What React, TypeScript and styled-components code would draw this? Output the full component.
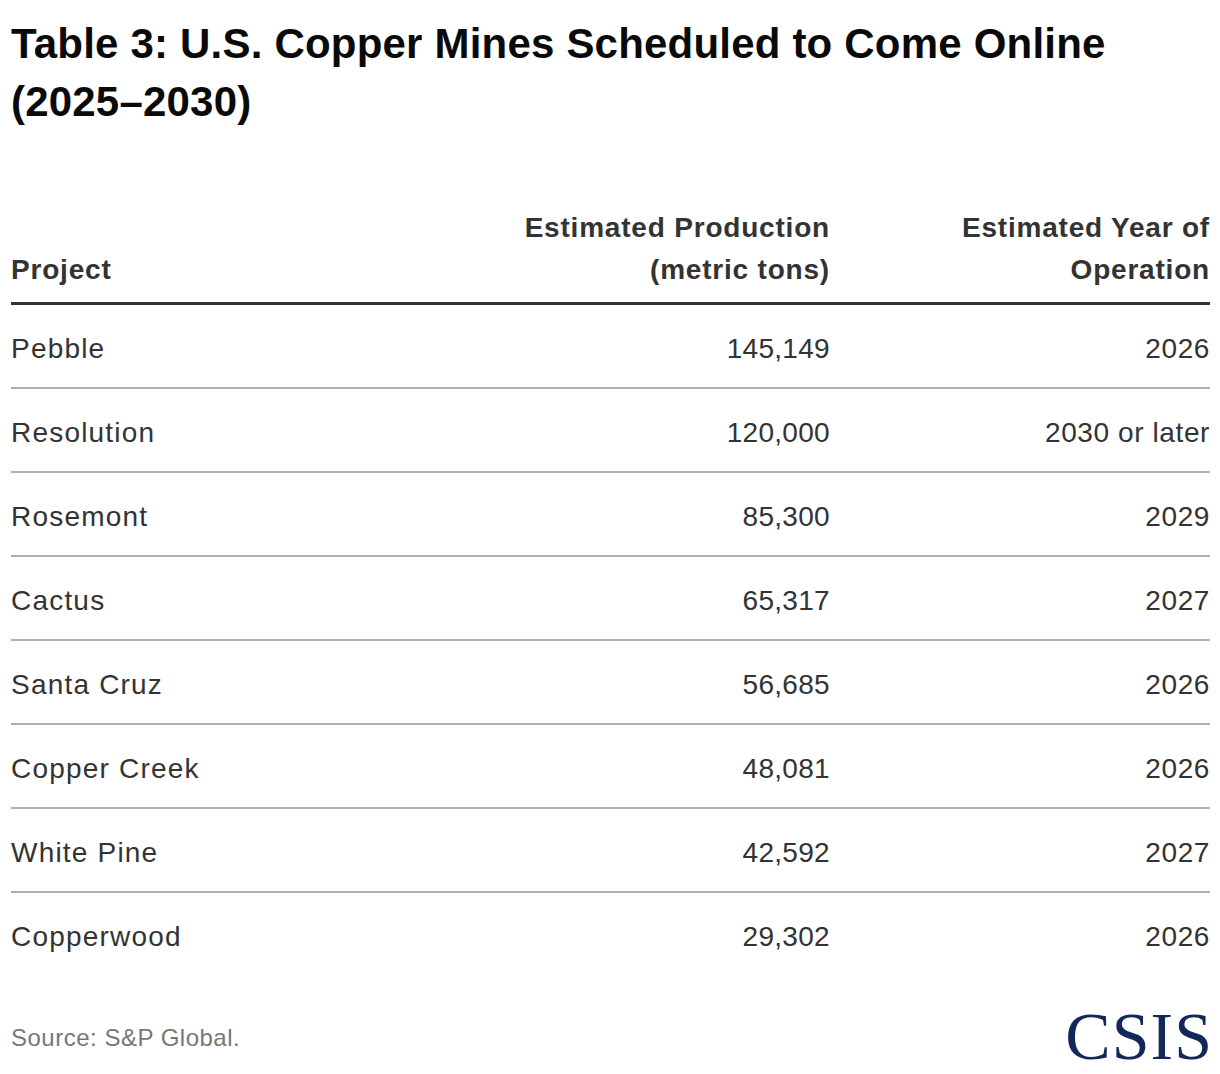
import styled, { createGlobalStyle } from "styled-components";

const GlobalStyle = createGlobalStyle`
    html, body {
        margin: 0;
        padding: 0;
        background: #ffffff;
    }
    body {
        font-family: "Liberation Sans", Arial, sans-serif;
        color: #333333;
    }
`;

const Wrapper = styled.div`
    width: 1220px;
    box-sizing: border-box;
    padding: 15px 10px 0 11px;
`;

const Title = styled.h1`
    margin: 0;
    font-size: 42px;
    line-height: 58px;
    font-weight: 700;
    color: #0a0a0a;
    letter-spacing: 0.2px;
`;

const Table = styled.div`
    margin-top: 76px;
    display: grid;
    grid-template-columns: 1fr 400px 380px;
`;

const HeadCell = styled.div<{ $right?: boolean }>`
    display: flex;
    align-items: flex-end;
    justify-content: ${(p) => (p.$right ? "flex-end" : "flex-start")};
    text-align: ${(p) => (p.$right ? "right" : "left")};
    padding-bottom: 11px;
    border-bottom: 3px solid #333333;
    font-size: 28px;
    line-height: 42px;
    font-weight: 700;
    color: #333333;
    letter-spacing: 0.8px;
`;

const Cell = styled.div<{ $right?: boolean; $last?: boolean; $spacing: number }>`
    height: 84px;
    box-sizing: border-box;
    padding-top: 28px;
    display: flex;
    align-items: flex-start;
    justify-content: ${(p) => (p.$right ? "flex-end" : "flex-start")};
    border-bottom: ${(p) => (p.$last ? "none" : "2px solid #b0b0b0")};
    font-size: 28px;
    line-height: 32px;
    color: #333333;
    letter-spacing: ${(p) => p.$spacing}px;
`;

const Footer = styled.div`
    margin-top: 25px;
    display: flex;
    align-items: flex-end;
    justify-content: space-between;
`;

const Source = styled.div`
    font-size: 24px;
    color: #777777;
    padding-bottom: 18px;
    letter-spacing: 0.5px;
`;

const Logo = styled.div`
    font-family: "Liberation Serif", "Times New Roman", serif;
    font-size: 68px;
    line-height: 1;
    color: #14275a;
    letter-spacing: 1px;
    margin-right: -3px;
`;

const rows = [
    ["Pebble", "145,149", "2026"],
    ["Resolution", "120,000", "2030 or later"],
    ["Rosemont", "85,300", "2029"],
    ["Cactus", "65,317", "2027"],
    ["Santa Cruz", "56,685", "2026"],
    ["Copper Creek", "48,081", "2026"],
    ["White Pine", "42,592", "2027"],
    ["Copperwood", "29,302", "2026"],
];

export default function App() {
    return (
        <Wrapper>
            <GlobalStyle />
            <Title>
                Table 3: U.S. Copper Mines Scheduled to Come Online
                <br />
                (2025–2030)
            </Title>
            <Table>
                <HeadCell>Project</HeadCell>
                <HeadCell $right>
                    Estimated Production
                    <br />
                    (metric tons)
                </HeadCell>
                <HeadCell $right>
                    Estimated Year of
                    <br />
                    Operation
                </HeadCell>
                {rows.map((row, i) => {
                    const last = i === rows.length - 1;
                    return [
                        <Cell key={`${i}a`} $last={last} $spacing={1.2}>{row[0]}</Cell>,
                        <Cell key={`${i}b`} $right $last={last} $spacing={0.3}>{row[1]}</Cell>,
                        <Cell key={`${i}c`} $right $last={last} $spacing={0.6}>{row[2]}</Cell>,
                    ];
                })}
            </Table>
            <Footer>
                <Source>Source: S&amp;P Global.</Source>
                <Logo>CSIS</Logo>
            </Footer>
        </Wrapper>
    );
}
